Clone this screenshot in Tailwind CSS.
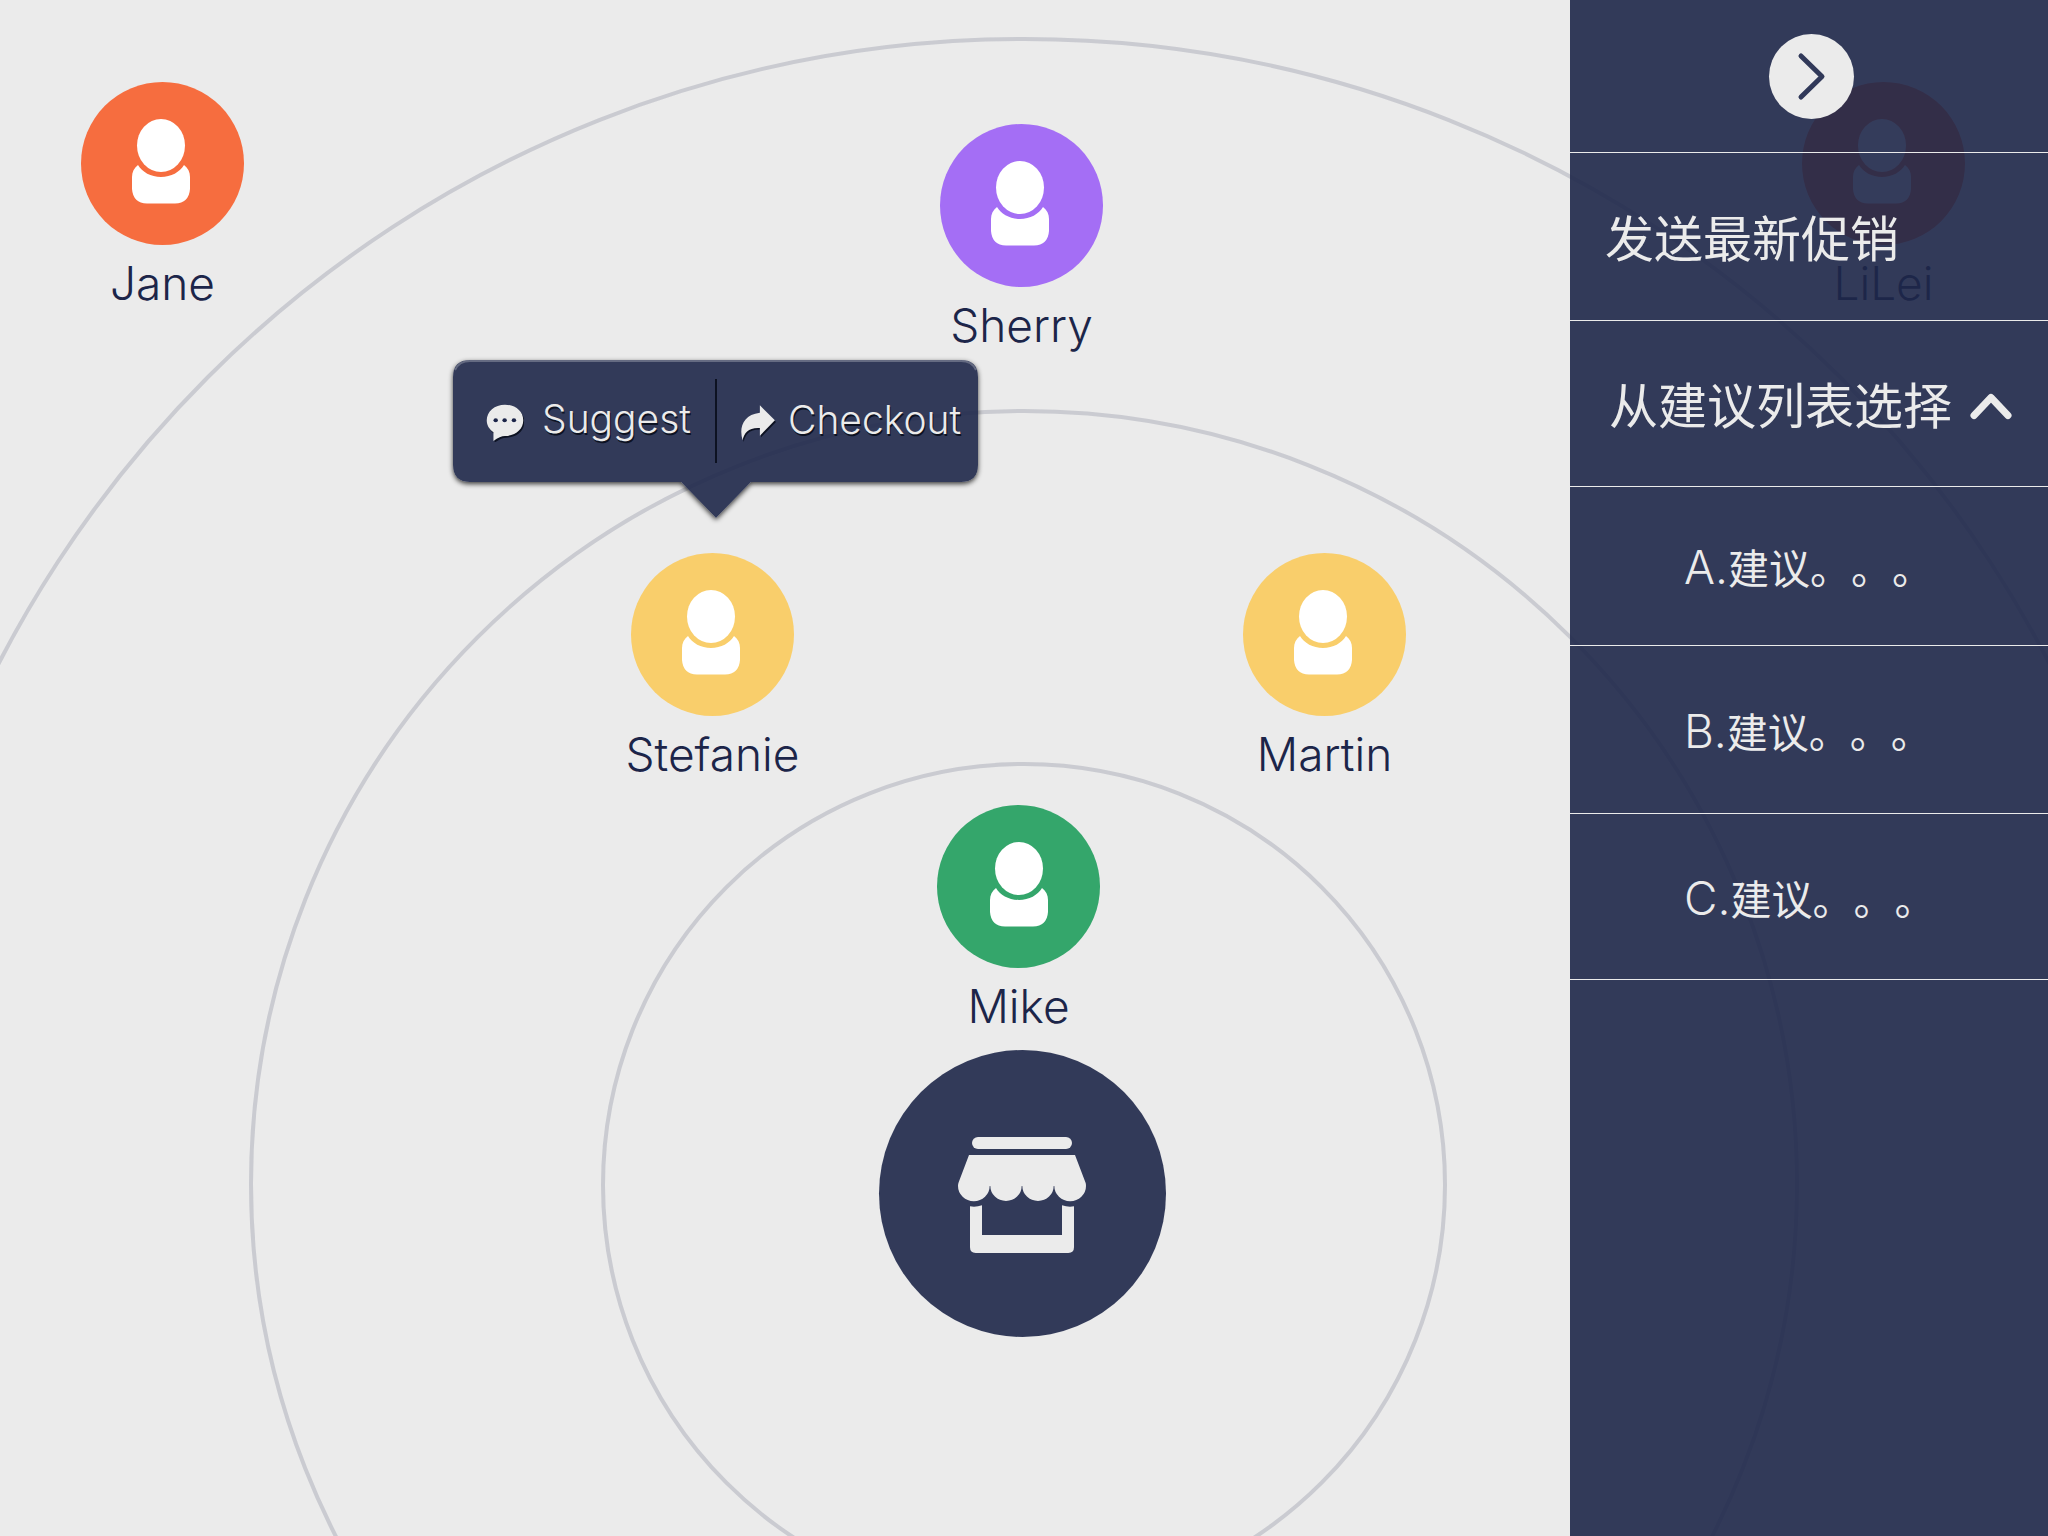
<!DOCTYPE html>
<html lang="zh-CN">
<head>
<meta charset="utf-8">
<meta name="viewport" content="width=device-width, initial-scale=1">
<title>Nearby customers</title>
<script src="https://cdn.jsdelivr.net/npm/@tailwindcss/browser@4"></script>
</head>
<body class="bg-[#ebebeb] font-['Inter','Noto_Sans_CJK_SC',sans-serif] text-[#1c2549]">

<svg class="hidden" aria-hidden="true">
  <symbol id="person" viewBox="0 0 163 163">
    <ellipse cx="80" cy="63.500" rx="24" ry="26.500"/>
    <path d="M57 83C61 90 70 95 80 95S99 90 103 83C107 86 109 90 109 95V107Q108 121 94 121.500H66Q52 121 51 107V95C51 90 53 86 57 83Z"/>
  </symbol>
</svg>

<div class="relative flex min-h-screen justify-end overflow-hidden">

  <!-- Radar canvas: distance rings and people around the shop -->
  <main class="absolute inset-0 font-[350]">
    <div class="absolute top-[37px] left-1/2 size-[2312px] -translate-x-1/2 rounded-full border-4 border-[#1c2549]/16"></div>
    <div class="absolute top-[409px] left-1/2 size-[1550px] -translate-x-1/2 rounded-full border-4 border-[#1c2549]/16"></div>
    <div class="absolute top-[762px] left-1/2 size-[846px] -translate-x-1/2 rounded-full border-4 border-[#1c2549]/16"></div>

    <button class="absolute top-[82px] left-[calc(50%-943px)] flex w-[163px] flex-col items-center gap-2.5 text-[46px] leading-[56px]">
      <svg class="size-[163px] rounded-full bg-[#f66d3f] fill-white"><use href="#person"/></svg>
      <span>Jane</span>
    </button>
    <button class="absolute top-[124px] left-[calc(50%-84px)] flex w-[163px] flex-col items-center gap-2.5 text-[46px] leading-[56px]">
      <svg class="size-[163px] rounded-full bg-[#a46ef5] fill-white"><use href="#person"/></svg>
      <span>Sherry</span>
    </button>
    <button class="absolute top-[553px] left-[calc(50%-393px)] flex w-[163px] flex-col items-center gap-2.5 text-[46px] leading-[56px]">
      <svg class="size-[163px] rounded-full bg-[#f9ce6b] fill-white"><use href="#person"/></svg>
      <span>Stefanie</span>
    </button>
    <button class="absolute top-[553px] left-[calc(50%+219px)] flex w-[163px] flex-col items-center gap-2.5 text-[46px] leading-[56px]">
      <svg class="size-[163px] rounded-full bg-[#f9ce6b] fill-white"><use href="#person"/></svg>
      <span>Martin</span>
    </button>
    <button class="absolute top-[805px] left-[calc(50%-87px)] flex w-[163px] flex-col items-center gap-2.5 text-[46px] leading-[56px]">
      <svg class="size-[163px] rounded-full bg-[#34a66b] fill-white"><use href="#person" x="2"/></svg>
      <span>Mike</span>
    </button>
    <button class="absolute top-[82px] left-[calc(50%+778px)] flex w-[163px] flex-col items-center gap-2.5 text-[46px] leading-[56px]">
      <svg class="size-[163px] rounded-full bg-[#f66d3f] fill-white"><use href="#person"/></svg>
      <span>LiLei</span>
    </button>

    <button class="absolute top-[1050px] left-[calc(50%-145px)] size-[287px] rounded-full bg-[#1e2749]/90" aria-label="Shop">
      <svg class="size-full fill-[#ebebeb]" viewBox="57 60 861 861">
        <rect x="336" y="321" width="300" height="36" rx="18"/>
        <path d="M327 375H645L677 459Q678 462 678 468A47 45 0 0 1 583 468H581A47 45 0 0 1 487 468H485A47 45 0 0 1 391 468H389A47 45 0 0 1 294 468Q294 462 296 457Z"/>
        <path d="M330 529Q348 532 366 526V615H606V526Q624 532 642 529V652Q642 669 625 669H347Q330 669 330 652Z"/>
      </svg>
    </button>

    <!-- Action bubble for the selected customer -->
    <div class="absolute top-[360px] left-[calc(50%-571px)] flex h-[122px] w-[525px] items-center text-[39px] leading-[48px] text-[#ebebeb]">
      <svg class="absolute -top-5 -left-5 h-[200px] w-[565px]" viewBox="-20 -20 565 200" aria-hidden="true">
        <defs>
          <path id="bubble" d="M17 0H508Q525 0 525 17V105Q525 122 508 122H298L263 158L228 122H17Q0 122 0 105V17Q0 0 17 0Z"/>
          <mask id="outside" maskUnits="userSpaceOnUse" x="-20" y="-20" width="565" height="200">
            <rect x="-20" y="-20" width="565" height="200" fill="white"/>
            <use href="#bubble" fill="black"/>
          </mask>
          <filter id="soft" x="-10%" y="-20%" width="120%" height="140%"><feGaussianBlur stdDeviation="2.500"/></filter>
        </defs>
        <g mask="url(#outside)"><use href="#bubble" y="2" fill="black" fill-opacity=".75" filter="url(#soft)"/></g>
        <use href="#bubble" fill="#1e2749" fill-opacity=".9"/>
        <path d="M2 10Q6 1 17 1H508Q519 1 523 10" fill="none" stroke="white" stroke-opacity=".25" stroke-width="2"/>
      </svg>
      <button class="relative flex w-[262px] items-center gap-[18px] pb-1 pl-[33px] text-shadow-[1px_2px_0_#0d1222]">
        <svg class="mt-2 size-[38px] shrink-0" viewBox="152 190 102 114" preserveAspectRatio="none">
          <path transform="translate(3 5)" fill="#0d1222" d="M203 192C231 192 252 212 252 239S231 286 203 286Q190 286 172 301V275C160 266 154 253 154 239C154 212 175 192 203 192Z"/>
          <path fill="#ebebeb" d="M203 192C231 192 252 212 252 239S231 286 203 286Q190 286 172 301V275C160 266 154 253 154 239C154 212 175 192 203 192Z"/>
          <g fill="#1c2549"><circle cx="178" cy="239" r="6"/><circle cx="202" cy="239" r="6"/><circle cx="227" cy="239" r="6"/></g>
        </svg>
        Suggest
      </button>
      <div class="relative h-[84px] w-[2px] bg-[#0d1222]"></div>
      <button class="relative flex flex-1 items-center gap-3 pb-0.5 pl-[23px] text-shadow-[1px_2px_0_#0d1222]">
        <svg class="mt-2 h-[38px] w-[36px] shrink-0" viewBox="839 193 96 114" preserveAspectRatio="none">
          <path transform="translate(3 5)" fill="#0d1222" d="M892 194L932 239L892 285V262C862 260 850 276 846 299C836 262 846 222 892 216Z"/>
          <path fill="#ebebeb" d="M892 194L932 239L892 285V262C862 260 850 276 846 299C836 262 846 222 892 216Z"/>
        </svg>
        Checkout
      </button>
    </div>
  </main>

  <!-- Slide-over panel -->
  <aside class="relative w-[478px] bg-[#1e2749]/90 text-[#ebebeb]">
    <div class="flex h-[153px] items-center justify-center border-b border-[#ebebeb] pl-1">
      <button class="flex size-[85px] items-center justify-center rounded-full bg-[#ebebeb]" aria-label="Close panel">
        <svg class="size-[85px] fill-none stroke-[#313959]" viewBox="0 0 85 85" stroke-width="5" stroke-linecap="round" stroke-linejoin="round"><path d="M32 22L53 42.500L32 63"/></svg>
      </button>
    </div>
    <button class="flex h-[168px] w-full items-center border-b border-[#ebebeb] pt-1.5 pl-[35px] text-[49px] leading-[72px]">发送最新促销</button>
    <button class="flex h-[166px] w-full items-center gap-[18px] border-b border-[#ebebeb] pt-1.5 pl-[39px] text-[49px] leading-[72px]" aria-expanded="true">
      从建议列表选择
      <svg class="h-[27px] w-[42px] fill-none stroke-[#ebebeb]" viewBox="0 0 42 27" stroke-width="7" stroke-linecap="round" stroke-linejoin="round"><path d="M4 22.500L21 4.500L38 22.500"/></svg>
    </button>
    <ul class="text-[41px] leading-[60px] [text-spacing-trim:space-all]">
      <li><button class="flex h-[159px] w-full items-center border-b border-[#ebebeb] pt-1 pl-[114px]"><span><span class="text-[46px] font-[350]">A.</span>建议。。。</span></button></li>
      <li><button class="flex h-[168px] w-full items-center border-b border-[#ebebeb] pt-1 pl-[114px]"><span><span class="text-[46px] font-[350]">B.</span>建议。。。</span></button></li>
      <li><button class="flex h-[166px] w-full items-center border-b border-[#ebebeb] pt-1 pl-[114px]"><span><span class="text-[46px] font-[350]">C.</span>建议。。。</span></button></li>
    </ul>
  </aside>
</div>
</body>
</html>
